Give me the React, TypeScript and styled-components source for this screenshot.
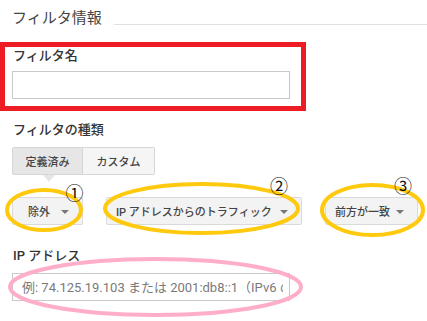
import React from 'react';
import styled, {createGlobalStyle} from 'styled-components';

const GlobalStyle = createGlobalStyle`
  html, body {
    margin: 0;
    padding: 0;
    background: #ffffff;
  }
  body {
    font-family: Roboto, "Noto Sans CJK JP", sans-serif;
    color: #333;
  }
`;

const Page = styled.div`
  position: relative;
  width: 427px;
  height: 321px;
  overflow: hidden;
  background: #fff;
`;

const Header = styled.div`
  display: flex;
  align-items: flex-end;
  padding: 8px 0 0 12px;
`;

const Title = styled.h2`
  margin: 0;
  font-size: 15px;
  line-height: 20px;
  font-weight: 400;
  color: #444;
`;

const Rule = styled.div`
  flex: 1;
  height: 1px;
  background: #e0e0e0;
  margin: 0 0 3px 12px;
`;

const Highlight = styled.div`
  box-sizing: border-box;
  width: 306px;
  margin-top: 14px;
  border: 5px solid #ed1c24;
  padding: 0 0 7px 7px;
`;

const Section = styled.div<{top: number}>`
  padding-left: 12px;
  margin-top: ${({top}) => top}px;
`;

const Label = styled.div`
  font-size: 13px;
  line-height: 18px;
  font-weight: 500;
  color: #333;
  padding-left: 1px;
`;

const TextInput = styled.input<{gap?: number}>`
  display: block;
  box-sizing: border-box;
  width: 278px;
  height: 28px;
  margin-top: ${({gap}) => gap ?? 6}px;
  border: 1px solid #c9c9c9;
  padding: 0 6px 0 9px;
  font-family: Roboto, "Noto Sans CJK JP", sans-serif;
  font-size: 13px;
  color: #333;
  background: #fff;
  outline: none;

  &::placeholder {
    color: #7a7a7a;
  }
`;

const Segmented = styled.div`
  display: flex;
  margin-top: 8px;
`;

const SegButton = styled.div<{active?: boolean; w: number}>`
  position: relative;
  box-sizing: border-box;
  width: ${({w}) => w}px;
  height: 28px;
  display: flex;
  align-items: center;
  justify-content: center;
  font-size: 11px;
  font-weight: 500;
  color: #444;
  background: ${({active}) => (active ? '#e6e6e6' : '#f5f5f5')};
  border: 1px solid #d6d6d6;
  border-left-width: ${({active}) => (active ? 1 : 0)}px;
  border-radius: ${({active}) => (active ? '2px 0 0 2px' : '0 2px 2px 0')};

  &::after {
    content: '';
    display: ${({active}) => (active ? 'block' : 'none')};
    position: absolute;
    left: 30px;
    top: 27px;
    border-left: 6px solid transparent;
    border-right: 6px solid transparent;
    border-top: 7px solid #e6e6e6;
  }
`;

const DropdownRow = styled.div`
  display: flex;
  gap: 23px;
  margin-top: 22px;
`;

const Dropdown = styled.div<{w: number; pad: number}>`
  box-sizing: border-box;
  width: ${({w}) => w}px;
  height: 28px;
  display: flex;
  align-items: center;
  justify-content: space-between;
  padding: 0 13px 0 ${({pad}) => pad}px;
  font-size: 11px;
  font-weight: 500;
  color: #444;
  background: #f3f3f3;
  border: 1px solid #dadada;
  border-radius: 2px;
`;

const Caret = styled.span`
  width: 0;
  height: 0;
  border-left: 4px solid transparent;
  border-right: 4px solid transparent;
  border-top: 4px solid #777;
  margin-top: 2px;
`;

const Marks = styled.svg`
  position: absolute;
  left: 0;
  top: 0;
  pointer-events: none;
`;

const MarkNumber = styled.text`
  font-family: "DejaVu Serif", "Noto Sans CJK JP", serif;
  font-size: 18px;
  fill: #111;
`;

const ellipses = [
  {cx: 44, cy: 210, rx: 37, ry: 20, color: '#ffc90e'},
  {cx: 201.5, cy: 208.5, rx: 96.5, ry: 24.5, color: '#ffc90e'},
  {cx: 372.5, cy: 210, rx: 50.5, ry: 25, color: '#ffc90e'},
  {cx: 155.5, cy: 287, rx: 145.5, ry: 28, color: '#ffaec9'},
];

const numbers = [
  {x: 74.5, y: 193, label: '①'},
  {x: 279, y: 186.5, label: '②'},
  {x: 403, y: 186.5, label: '③'},
];

const App: React.FC = () => {
  return (
    <Page>
      <GlobalStyle />
      <Header>
        <Title>フィルタ情報</Title>
        <Rule />
      </Header>

      <Highlight>
        <Label>フィルタ名</Label>
        <TextInput type="text" />
      </Highlight>

      <Section top={10}>
        <Label>フィルタの種類</Label>
        <Segmented>
          <SegButton active w={71}>
            定義済み
          </SegButton>
          <SegButton w={72}>カスタム</SegButton>
        </Segmented>
        <DropdownRow>
          <Dropdown w={71} pad={15}>
            <span>除外</span>
            <Caret />
          </Dropdown>
          <Dropdown w={196} pad={9}>
            <span>IP アドレスからのトラフィック</span>
            <Caret />
          </Dropdown>
          <Dropdown w={93} pad={9}>
            <span>前方が一致</span>
            <Caret />
          </Dropdown>
        </DropdownRow>
      </Section>

      <Section top={22}>
        <Label>IP アドレス</Label>
        <TextInput
          type="text"
          gap={8}
          placeholder="例: 74.125.19.103 または 2001:db8::1（IPv6 の場合）"
        />
      </Section>

      <Marks width={427} height={321} viewBox="0 0 427 321">
        {ellipses.map((e, i) => (
          <ellipse
            key={i}
            cx={e.cx}
            cy={e.cy}
            rx={e.rx}
            ry={e.ry}
            fill="none"
            stroke={e.color}
            strokeWidth={4}
          />
        ))}
        {numbers.map(n => (
          <MarkNumber
            key={n.label}
            x={n.x}
            y={n.y}
            textAnchor="middle"
            dominantBaseline="central"
          >
            {n.label}
          </MarkNumber>
        ))}
      </Marks>
    </Page>
  );
};

export default App;
